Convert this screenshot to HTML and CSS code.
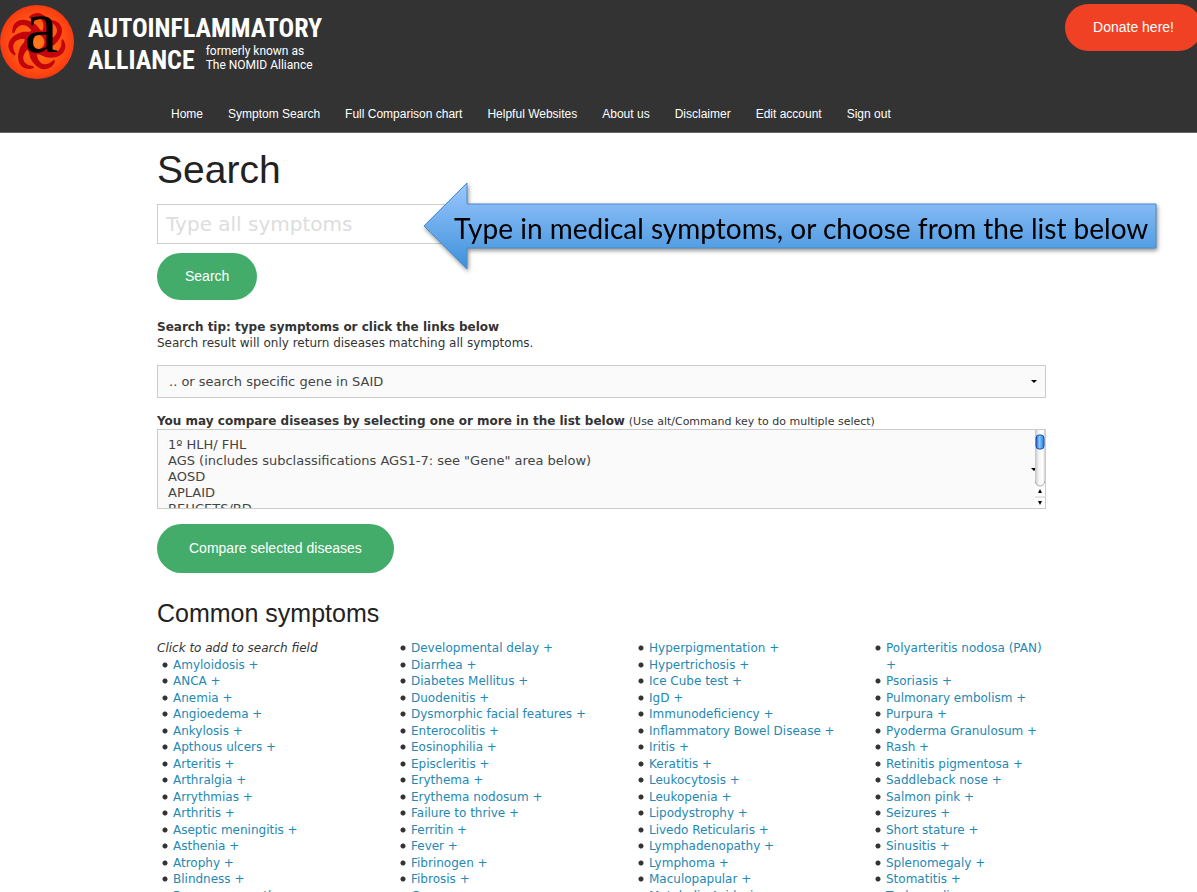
FILE: index.html
```html
<!DOCTYPE html>
<html lang="en">
<head>
    <meta charset="UTF-8">
    <meta name="viewport" content="width=device-width, initial-scale=1.0">
    <title>Search - Autoinflammatory Alliance</title>
    <link rel="stylesheet" href="styles.css">
</head>
<body>
    <header>
        <div class="top">
            <a href="#home" class="brand">
                <svg class="logo" viewBox="0 0 76 76" aria-hidden="true">
                    <defs>
                        <radialGradient id="sun">
                            <stop offset="0" stop-color="#ff7a1c"/>
                            <stop offset="0.6" stop-color="#ff5a12"/>
                            <stop offset="1" stop-color="#fb3a12"/>
                        </radialGradient>
                        <path id="arm" d="M14,-22 C26,-21 30,-8 17,3 L9,7 L9,-2 C21,-4 24,-14 14,-20Z"/>
                    </defs>
                    <circle cx="37" cy="38" r="37" fill="url(#sun)"/>
                    <g transform="translate(37 38)" fill="#c4040c">
                        <use href="#arm"/>
                        <use href="#arm" transform="rotate(51)"/>
                        <use href="#arm" transform="rotate(103)"/>
                        <use href="#arm" transform="rotate(154)"/>
                        <use href="#arm" transform="rotate(206)"/>
                        <use href="#arm" transform="rotate(257)"/>
                        <use href="#arm" transform="rotate(309)"/>
                        <circle r="10" fill="none" stroke="#c4040c" stroke-width="5"/>
                    </g>
                    <text x="41" y="48" text-anchor="middle" class="logo-letter">a</text>
                </svg>
                <span class="brand-text">
                    <span class="brand-line">AUTOINFLAMMATORY</span>
                    <span class="brand-row">
                        <span class="brand-line">ALLIANCE</span>
                        <span class="brand-sub">formerly known as<br>The NOMID Alliance</span>
                    </span>
                </span>
            </a>
            <a href="#donate" class="button donate">Donate here!</a>
        </div>
        <nav>
            <ul>
                <li><a href="#home">Home</a></li>
                <li><a href="#search">Symptom Search</a></li>
                <li><a href="#chart">Full Comparison chart</a></li>
                <li><a href="#websites">Helpful Websites</a></li>
                <li><a href="#about">About us</a></li>
                <li><a href="#disclaimer">Disclaimer</a></li>
                <li><a href="#account">Edit account</a></li>
                <li><a href="#signout">Sign out</a></li>
            </ul>
        </nav>
    </header>

    <main class="container">
        <h1>Search</h1>
        <form id="search">
            <div class="search-box">
                <input type="text" name="symptoms" placeholder="Type all symptoms" aria-label="Type all symptoms">
                <svg class="callout" viewBox="0 0 742 98">
                    <defs>
                        <linearGradient id="blue" x1="0" y1="0" x2="0" y2="1">
                            <stop offset="0" stop-color="#9cc7ff"/>
                            <stop offset="1" stop-color="#3c90d9"/>
                        </linearGradient>
                    </defs>
                    <path d="M1,44 L44,1 V22 H733 V66 H44 V87Z" fill="url(#blue)" stroke="#4a8ecb"/>
                    <text x="31" y="57">Type in medical symptoms, or choose from the list below</text>
                </svg>
            </div>
            <button type="submit" class="button">Search</button>
        </form>

        <p class="tip"><strong>Search tip: type symptoms or click the links below</strong><br>
            Search result will only return diseases matching all symptoms.</p>

        <select class="gene" name="gene" aria-label="Search specific gene">
            <option>.. or search specific gene in SAID</option>
        </select>

        <form>
            <label for="diseases"><strong>You may compare diseases by selecting one or more in the list below</strong> <small>(Use alt/Command key to do multiple select)</small></label>
            <div class="list-box">
                <select id="diseases" class="diseases" name="diseases" multiple size="4">
                    <option>1º HLH/ FHL</option>
                    <option>AGS (includes subclassifications AGS1-7: see "Gene" area below)</option>
                    <option>AOSD</option>
                    <option>APLAID</option>
                    <option>BEHCETS/BD</option>
                </select>
                <svg class="scrollbar" viewBox="0 0 10 78" aria-hidden="true">
                    <defs>
                        <linearGradient id="track">
                            <stop offset="0" stop-color="#c4c4c4"/>
                            <stop offset="0.4" stop-color="#f6f6f6"/>
                            <stop offset="0.8" stop-color="#fff"/>
                            <stop offset="1" stop-color="#ccc"/>
                        </linearGradient>
                        <linearGradient id="thumb">
                            <stop offset="0" stop-color="#1450c8"/>
                            <stop offset="0.4" stop-color="#8cccff"/>
                            <stop offset="0.7" stop-color="#4aa8f8"/>
                            <stop offset="1" stop-color="#2a70c8"/>
                        </linearGradient>
                    </defs>
                    <rect width="10" height="78" fill="#fff"/>
                    <path d="M0,0 H10 V51 Q9,56 5,56 Q1,56 0,51Z" fill="url(#track)"/>
                    <path d="M0,51 Q1,56 5,56 Q9,56 10,51" fill="none" stroke="#aaa"/>
                    <rect x="1" y="5" width="8" height="14" rx="3" fill="url(#thumb)" stroke="#2454a8"/>
                    <path d="M3,63 H7 L5,59Z M3,71 H7 L5,75Z" fill="#000"/>
                    <path d="M0,67 H10" stroke="#ccc"/>
                </svg>
            </div>
            <button type="submit" class="button compare">Compare selected diseases</button>
        </form>

        <h2>Common symptoms</h2>
        <div class="symptoms">
            <div>
                <em>Click to add to search field</em>
                <ul>
                    <li><a href="#add">Amyloidosis +</a></li>
                    <li><a href="#add">ANCA +</a></li>
                    <li><a href="#add">Anemia +</a></li>
                    <li><a href="#add">Angioedema +</a></li>
                    <li><a href="#add">Ankylosis +</a></li>
                    <li><a href="#add">Apthous ulcers +</a></li>
                    <li><a href="#add">Arteritis +</a></li>
                    <li><a href="#add">Arthralgia +</a></li>
                    <li><a href="#add">Arrythmias +</a></li>
                    <li><a href="#add">Arthritis +</a></li>
                    <li><a href="#add">Aseptic meningitis +</a></li>
                    <li><a href="#add">Asthenia +</a></li>
                    <li><a href="#add">Atrophy +</a></li>
                    <li><a href="#add">Blindness +</a></li>
                    <li><a href="#add">Bone overgrowth +</a></li>
                </ul>
            </div>
            <ul>
                <li><a href="#add">Developmental delay +</a></li>
                <li><a href="#add">Diarrhea +</a></li>
                <li><a href="#add">Diabetes Mellitus +</a></li>
                <li><a href="#add">Duodenitis +</a></li>
                <li><a href="#add">Dysmorphic facial features +</a></li>
                <li><a href="#add">Enterocolitis +</a></li>
                <li><a href="#add">Eosinophilia +</a></li>
                <li><a href="#add">Episcleritis +</a></li>
                <li><a href="#add">Erythema +</a></li>
                <li><a href="#add">Erythema nodosum +</a></li>
                <li><a href="#add">Failure to thrive +</a></li>
                <li><a href="#add">Ferritin +</a></li>
                <li><a href="#add">Fever +</a></li>
                <li><a href="#add">Fibrinogen +</a></li>
                <li><a href="#add">Fibrosis +</a></li>
                <li><a href="#add">Gangrene +</a></li>
            </ul>
            <ul>
                <li><a href="#add">Hyperpigmentation +</a></li>
                <li><a href="#add">Hypertrichosis +</a></li>
                <li><a href="#add">Ice Cube test +</a></li>
                <li><a href="#add">IgD +</a></li>
                <li><a href="#add">Immunodeficiency +</a></li>
                <li><a href="#add">Inflammatory Bowel Disease +</a></li>
                <li><a href="#add">Iritis +</a></li>
                <li><a href="#add">Keratitis +</a></li>
                <li><a href="#add">Leukocytosis +</a></li>
                <li><a href="#add">Leukopenia +</a></li>
                <li><a href="#add">Lipodystrophy +</a></li>
                <li><a href="#add">Livedo Reticularis +</a></li>
                <li><a href="#add">Lymphadenopathy +</a></li>
                <li><a href="#add">Lymphoma +</a></li>
                <li><a href="#add">Maculopapular +</a></li>
                <li><a href="#add">Metabolic Acidosis +</a></li>
            </ul>
            <ul>
                <li><a href="#add">Polyarteritis nodosa (PAN) +</a></li>
                <li><a href="#add">Psoriasis +</a></li>
                <li><a href="#add">Pulmonary embolism +</a></li>
                <li><a href="#add">Purpura +</a></li>
                <li><a href="#add">Pyoderma Granulosum +</a></li>
                <li><a href="#add">Rash +</a></li>
                <li><a href="#add">Retinitis pigmentosa +</a></li>
                <li><a href="#add">Saddleback nose +</a></li>
                <li><a href="#add">Salmon pink +</a></li>
                <li><a href="#add">Seizures +</a></li>
                <li><a href="#add">Short stature +</a></li>
                <li><a href="#add">Sinusitis +</a></li>
                <li><a href="#add">Splenomegaly +</a></li>
                <li><a href="#add">Stomatitis +</a></li>
                <li><a href="#add">Tachycardia +</a></li>
            </ul>
        </div>
    </main>
</body>
</html>
```

FILE: styles.css
```css
* {
    box-sizing: border-box;
}
body {
    margin: 0;
    font-family: Verdana, "DejaVu Sans", sans-serif;
    font-size: 12px;
    line-height: 16px;
    color: #333;
    background-color: #fff;
    overflow-x: hidden;
}
a {
    text-decoration: none;
}
header {
    background-color: #333;
    border-bottom: 1px solid #666;
}
.top {
    display: flex;
    justify-content: space-between;
    align-items: flex-start;
    height: 96px;
    padding-top: 4px;
}
.brand {
    display: flex;
    gap: 12px;
    color: #fff;
}
.logo {
    width: 76px;
    height: 76px;
}
.logo-letter {
    font: 76px "Liberation Serif", serif;
    fill: #000;
}
.brand-text {
    padding-top: 8px;
}
.brand-line {
    display: block;
    font: bold 26px/32px "Roboto Condensed", "Liberation Sans Narrow", "DejaVu Sans Condensed", sans-serif;
}
.brand-row {
    display: flex;
    gap: 11px;
}
.brand-sub {
    font: 12px/14px Roboto, sans-serif;
}
.button {
    display: inline-block;
    height: 47px;
    padding: 0 28px;
    border: 0;
    border-radius: 24px;
    background-color: #43ac6a;
    color: #fff;
    font: 14px/47px Helvetica, "Liberation Sans", sans-serif;
    cursor: pointer;
}
.donate {
    margin-right: -5px;
    background-color: #f04124;
}
nav ul {
    display: flex;
    gap: 25px;
    margin: 0;
    padding: 0 171px;
    list-style: none;
    white-space: nowrap;
}
nav a {
    color: #fff;
    font: 12px/36px Helvetica, "Liberation Sans", sans-serif;
}
.container {
    padding: 13px 151px 0 157px;
}
h1,
h2 {
    margin: 0;
    color: #222;
    font-family: Helvetica, "Liberation Sans", sans-serif;
    font-weight: normal;
}
h1 {
    font-size: 39px;
    line-height: 48px;
}
h2 {
    margin: 24px 0 11px;
    font-size: 25px;
    line-height: 32px;
}
.search-box {
    position: relative;
    margin: 10px 0 9px;
}
.search-box input {
    display: block;
    width: 100%;
    height: 40px;
    padding: 0 8px;
    border: 1px solid #ccc;
    font: 20px "DejaVu Sans", sans-serif;
}
.search-box input::placeholder {
    color: #ddd;
}
/* arrow note that lies over the search field */
.callout {
    position: absolute;
    top: -22px;
    left: 266px;
    width: 742px;
    height: 98px;
    filter: drop-shadow(1px 2px 2px rgba(0, 0, 0, 0.45));
}
.callout text {
    font: 28px Lato, sans-serif;
    fill: #000;
}
.tip {
    margin: 19px 0 14px;
}
small {
    font-size: 11px;
    line-height: 1;
}
select {
    display: block;
    width: 100%;
    border: 1px solid #ccc;
    border-radius: 0;
    appearance: none;
    background: #fafafa url("data:image/svg+xml,%3Csvg xmlns='http://www.w3.org/2000/svg' width='6' height='3'%3E%3Cpath d='M0 0h6L3 3z'/%3E%3C/svg%3E") no-repeat right 8px center;
    color: #444;
    font: 13px/16px "DejaVu Sans", sans-serif;
}
.gene {
    height: 33px;
    margin-bottom: 15px;
    padding: 0 11px;
}
label {
    display: block;
}
.list-box {
    position: relative;
    margin-bottom: 15px;
}
.diseases {
    height: 80px;
    padding: 7px 0 0 8px;
    overflow-y: scroll;
    scrollbar-width: none;
}
.diseases option {
    min-height: 16px;
    padding: 0 2px;
    line-height: 16px;
}
.scrollbar {
    position: absolute;
    top: 1px;
    right: 1px;
    width: 10px;
    height: 78px;
}
.compare {
    height: 49px;
    padding: 0 32px;
    border-radius: 25px;
}
.symptoms {
    display: grid;
    grid-template-columns: 238fr 238fr 237fr 176fr;
    line-height: 1.375;
}
.symptoms ul {
    margin: 0;
    padding: 0;
    list-style: none;
}
.symptoms li {
    padding-left: 16px;
    background: radial-gradient(circle at 8px 8px, #333 2px, transparent 3px);
}
.symptoms a {
    color: #2488b4;
}
```
